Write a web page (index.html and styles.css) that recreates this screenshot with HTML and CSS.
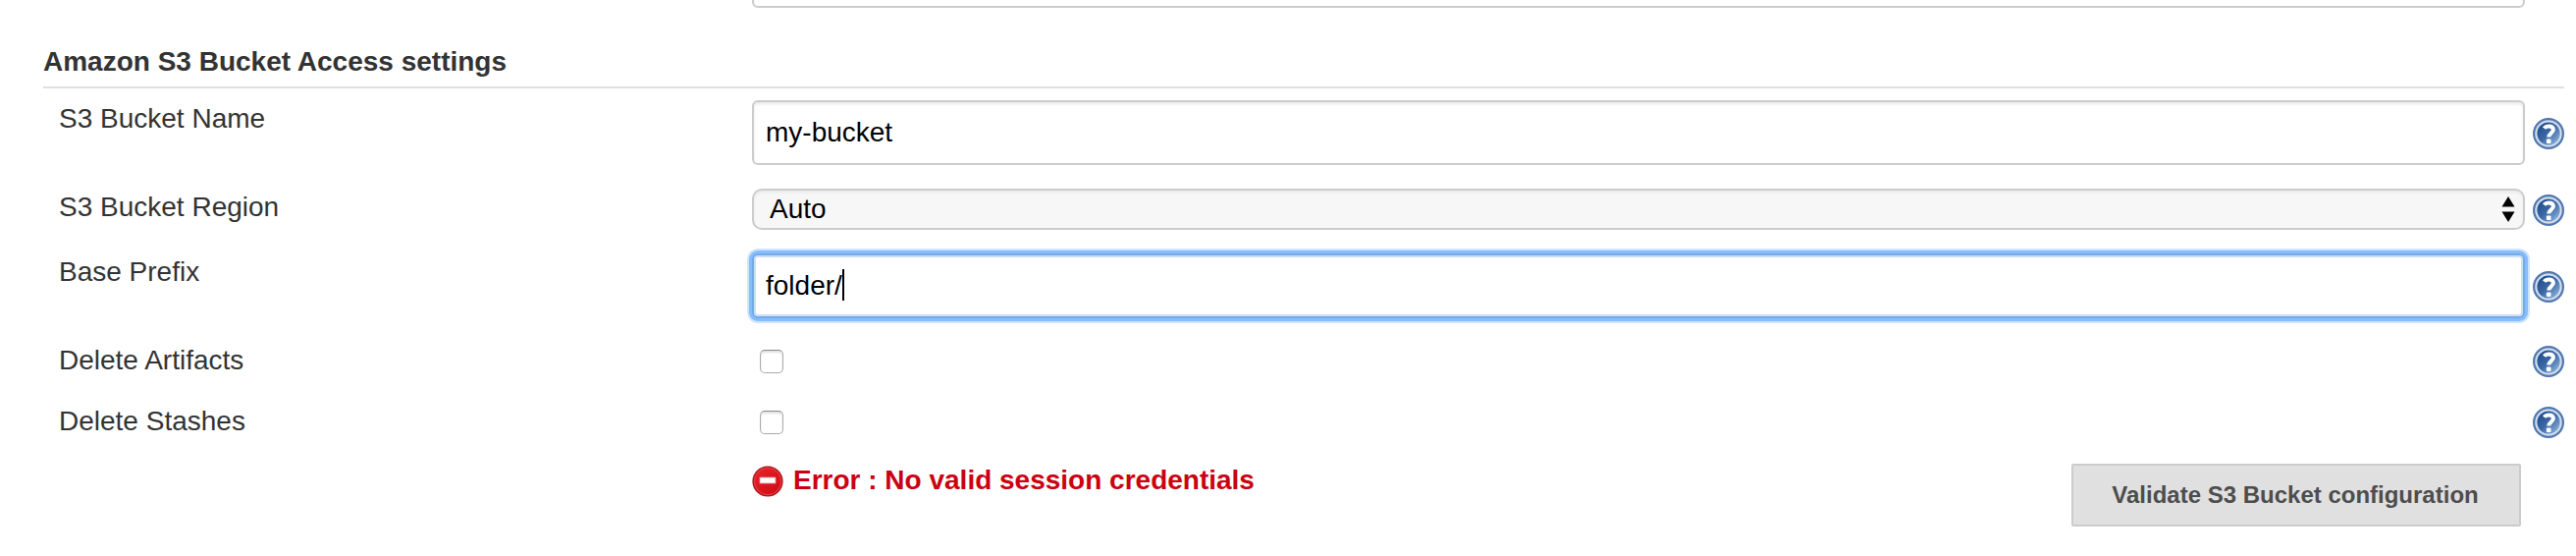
FILE: index.html
```html
<!DOCTYPE html>
<html lang="en">
<head>
<meta charset="utf-8">
<title>Amazon S3 Bucket Access settings</title>
<link rel="stylesheet" href="styles.css">
</head>
<body>
<svg class="defs" width="0" height="0" aria-hidden="true">
  <defs>
    <linearGradient id="blue" x1="0.1" y1="0.1" x2="0.9" y2="0.9">
      <stop offset="0.1" stop-color="#24508f"/>
      <stop offset="0.5" stop-color="#3c69a6"/>
      <stop offset="1" stop-color="#8fb5dc"/>
    </linearGradient>
    <linearGradient id="red" x1="0" y1="0" x2="1" y2="1">
      <stop offset="0" stop-color="#e8222a"/>
      <stop offset="1" stop-color="#cf0a14"/>
    </linearGradient>
    <symbol id="help" viewBox="0 0 32 32">
      <circle cx="16" cy="16" r="15" fill="#7d9cc8" stroke="#5076ae" stroke-width="2"/>
      <circle cx="16" cy="16" r="12.6" fill="url(#blue)" stroke="#d3dfee" stroke-width="2"/>
      <path d="M11.6 10.6C12.8 8.9 14.6 8.4 16.4 8.4c2.8 0 4.5 1.4 4.5 3.6 0 3.2-4.7 3.8-4.7 7.6" fill="none" stroke="#fff" stroke-width="4"/>
      <rect x="13.9" y="21.6" width="4.6" height="4.4" rx="0.8" fill="#fff"/>
    </symbol>
  </defs>
</svg>
<main class="form">
  <div class="field field-previous"></div>
  <h2 class="section-title">Amazon S3 Bucket Access settings</h2>

  <div class="row row-name">
    <div class="label">S3 Bucket Name</div>
    <div class="field">my-bucket</div>
    <svg class="help help-low"><use href="#help"/></svg>
  </div>
  <div class="row row-region">
    <div class="label">S3 Bucket Region</div>
    <div class="select"><span>Auto</span>
      <svg class="arrows" viewBox="0 0 14 26"><path d="M7 0l6.5 10.5H.5zM7 26L.5 15.5h13z"/></svg>
    </div>
    <svg class="help help-low"><use href="#help"/></svg>
  </div>
  <div class="row row-prefix">
    <div class="label">Base Prefix</div>
    <div class="field focused">folder/<span class="caret"></span></div>
    <svg class="help help-low"><use href="#help"/></svg>
  </div>
  <div class="row row-check">
    <div class="label">Delete Artifacts</div>
    <div class="checkbox"></div>
    <svg class="help"><use href="#help"/></svg>
  </div>
  <div class="row row-check">
    <div class="label">Delete Stashes</div>
    <div class="checkbox"></div>
    <svg class="help"><use href="#help"/></svg>
  </div>
  <div class="footer">
    <div class="error">
      <svg class="error-icon" viewBox="0 0 32 32">
        <circle cx="16" cy="16" r="15.6" fill="#b50d15"/>
        <circle cx="16" cy="16" r="13.6" fill="url(#red)" stroke="#df4046" stroke-width="1.2"/>
        <rect x="8" y="12" width="16" height="6" fill="#fff" stroke="#e99094" stroke-width="0.8"/>
      </svg>
      <span class="error-text">Error : No valid session credentials</span>
    </div>
    <button class="validate" type="button">Validate S3 Bucket configuration</button>
  </div>
</main>
</body>
</html>
```
FILE: styles.css
```css
* { box-sizing: border-box; }

body {
  margin: 0;
  background: #fff;
  color: #333;
  font-family: "Liberation Sans", Arial, Helvetica, sans-serif;
  font-size: 28px;
  line-height: 32px;
}

.defs { display: block; height: 0; }

.form {
  display: flex;
  flex-direction: column;
  width: 2612px;
  height: 566px;
  padding-left: 44px;
  overflow: hidden;
}

.section-title {
  height: 43px;
  margin: 39px 0 12px;
  border-bottom: 2px solid #e0e0e0;
  font-size: 28px;
  line-height: 32px;
}

.row {
  display: grid;
  grid-template-columns: 698px 1806px 32px;
  column-gap: 8px;
  align-items: center;
  flex: none;
  padding-left: 16px;
}

.row-name { height: 66px; margin-bottom: 24px; }
.row-region { height: 42px; margin-bottom: 24px; }
.row-prefix { height: 66px; margin-bottom: 24px; }
.row-check { height: 40px; margin-bottom: 22px; }

.label { align-self: start; padding-top: 3px; }

.field {
  display: flex;
  align-items: center;
  height: 66px;
  padding: 0 0 0 12px;
  border: 2px solid #ccc;
  border-radius: 6px;
  background: #fff;
  box-shadow: inset 0 2px 3px rgba(0, 0, 0, 0.09);
  color: #000;
}

.field-previous {
  flex: none;
  width: 1806px;
  height: 66px;
  margin: -58px 0 0 722px;
}

.focused {
  border-color: #73aaec;
  box-shadow: 0 0 0 3px #88bdfb, 0 0 0 5px #cee5ff, inset 0 0 0 2px #cbdff7;
}

.caret { width: 2px; height: 32px; margin-bottom: 2px; background: #000; }

.select {
  display: flex;
  justify-content: space-between;
  align-items: center;
  height: 42px;
  padding: 0 8px 0 16px;
  border: 2px solid #ccc;
  border-radius: 10px;
  background: #f7f7f7;
  box-shadow: inset 0 2px 3px rgba(0, 0, 0, 0.06);
  color: #000;
}

.arrows { width: 14px; height: 26px; }

.help { width: 32px; height: 32px; }
.help-low { margin-top: 2px; }

.checkbox {
  width: 24px;
  height: 24px;
  margin-left: 8px;
  border: 1px solid #aaa;
  border-top-color: #8c8c8c;
  border-radius: 5px;
  box-shadow: inset 0 2px 2px rgba(0, 0, 0, 0.12);
}

.footer {
  display: flex;
  justify-content: space-between;
  align-items: flex-start;
  padding: 0 44px 0 722px;
}

.error {
  display: flex;
  gap: 10px;
  color: #cc0010;
  font-weight: bold;
}

.error-icon { width: 32px; height: 32px; margin-top: 2px; }
.error-text { padding-top: 1px; }

.validate {
  width: 458px;
  height: 64px;
  padding: 0 2px 0 0;
  border: 2px solid #ccc;
  border-radius: 2px;
  background: #e0e0e0;
  color: #4d4d4d;
  font: bold 24px/28px "Liberation Sans", Arial, Helvetica, sans-serif;
}
```
